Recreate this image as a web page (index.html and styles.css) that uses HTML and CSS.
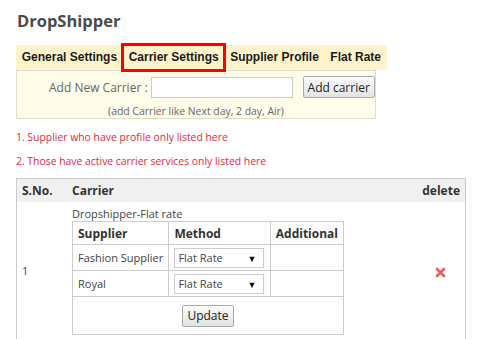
FILE: index.html
```html
<!DOCTYPE html>
<html lang="en">
<head>
    <meta charset="UTF-8">
    <meta name="viewport" content="width=device-width, initial-scale=1.0">
    <title>DropShipper</title>
    <link rel="stylesheet" href="styles.css">
</head>
<body>
    <div class="page">
        <h1 class="page-title">DropShipper</h1>

        <div class="tabs">
            <a class="tab">General Settings</a>
            <a class="tab tab-active">Carrier Settings</a>
            <a class="tab">Supplier Profile</a>
            <a class="tab">Flat Rate</a>
        </div>

        <div class="add-box">
            <div class="add-row">
                <label class="add-label" for="carrierName">Add New Carrier :</label>
                <input type="text" id="carrierName" class="add-input">
                <button class="btn">Add carrier</button>
            </div>
            <div class="add-hint">(add Carrier like Next day, 2 day, Air)</div>
        </div>

        <p class="note">1. Supplier who have profile only listed here</p>
        <p class="note">2. Those have active carrier services only listed here</p>

        <table class="carriers">
            <thead>
                <tr>
                    <th class="col-sno">S.No.</th>
                    <th>Carrier</th>
                    <th class="col-delete">delete</th>
                </tr>
            </thead>
            <tbody>
                <tr>
                    <td class="col-sno">1</td>
                    <td class="carrier-cell">
                        <div class="carrier-name">Dropshipper-Flat rate</div>
                        <table class="methods">
                            <thead>
                                <tr>
                                    <th class="col-supplier">Supplier</th>
                                    <th class="col-method">Method</th>
                                    <th class="col-additional">Additional</th>
                                </tr>
                            </thead>
                            <tbody>
                                <tr>
                                    <td>Fashion Supplier</td>
                                    <td>
                                        <span class="select-wrap">
                                            <select class="select">
                                                <option>Flat Rate</option>
                                            </select>
                                        </span>
                                    </td>
                                    <td></td>
                                </tr>
                                <tr>
                                    <td>Royal</td>
                                    <td>
                                        <span class="select-wrap">
                                            <select class="select">
                                                <option>Flat Rate</option>
                                            </select>
                                        </span>
                                    </td>
                                    <td></td>
                                </tr>
                                <tr>
                                    <td colspan="3" class="update-cell">
                                        <button class="btn">Update</button>
                                    </td>
                                </tr>
                            </tbody>
                        </table>
                    </td>
                    <td class="col-delete delete-cell">
                        <svg class="delete-icon" width="11" height="11" viewBox="0 0 11 11">
                            <path d="M2 2 L9 9 M9 2 L2 9" stroke="#f05a5c" stroke-width="2.6" stroke-linecap="round"/>
                        </svg>
                    </td>
                </tr>
            </tbody>
        </table>
    </div>
</body>
</html>
```

FILE: styles.css
```css
body {
    font-family: 'Open Sans', 'Liberation Sans', Arial, sans-serif;
    margin: 0;
    padding: 0;
    background-color: #fff;
    color: #444;
}

.page {
    padding: 0 16px;
}

.page-title {
    font-size: 16.5px;
    font-weight: bold;
    color: #4a4a4a;
    margin: 0;
    padding: 9px 0 0 1px;
    line-height: 24px;
}

.tabs {
    display: inline-flex;
    margin-top: 12px;
    background-color: #fff3cc;
    height: 25px;
    align-items: center;
}

.tab {
    font-family: 'Liberation Sans', Arial, sans-serif;
    font-size: 12px;
    font-weight: bold;
    color: #1a1a1a;
    padding: 0 5.75px;
    line-height: 25px;
    white-space: nowrap;
    cursor: pointer;
}

.tab-active {
    outline: 3px solid #f00;
    outline-offset: -1px;
}

.add-box {
    width: 358px;
    background-color: #fffde9;
    border: 1px solid #e2ddc4;
}

.add-row {
    display: flex;
    align-items: center;
    padding: 5px 0 0 32px;
    white-space: nowrap;
}

.add-label {
    font-size: 12px;
    color: #666;
    margin-right: 3px;
    flex-shrink: 0;
}

.add-input {
    width: 138px;
    height: 17px;
    border: 1px solid #ccc;
    padding: 1px;
    margin: 0 10px 0 0;
    flex-shrink: 0;
}

.btn {
    font-family: 'Open Sans', sans-serif;
    font-size: 12px;
    color: #222;
    background: linear-gradient(#fbfbfb, #e3e3e3);
    border: 1px solid #aaa;
    border-radius: 2px;
    height: 22px;
    padding: 0 4px;
    white-space: nowrap;
    flex-shrink: 0;
    cursor: pointer;
}

.add-hint {
    font-size: 10.4px;
    color: #666;
    text-align: center;
    margin-top: 6px;
    line-height: 14px;
}

.note {
    font-size: 10.4px;
    color: #e8243f;
    margin: 11px 0 0;
    line-height: 14px;
}

.note + .note {
    margin-top: 10px;
}

.carriers {
    width: 450px;
    margin-top: 10px;
    border: 1px solid #ccc;
    border-collapse: collapse;
    font-size: 11px;
}

.carriers > thead th {
    background-color: #f0f0f0;
    color: #333;
    font-size: 12px;
    font-weight: bold;
    text-align: left;
    height: 23px;
    padding: 0 5px;
}

.carriers > thead th.col-delete {
    text-align: right;
}

.carriers > tbody > tr > td {
    padding: 4px 5px;
    vertical-align: middle;
}

.col-sno {
    width: 40px;
}

.col-delete {
    width: 40px;
}

.carrier-name {
    line-height: 15px;
}

.delete-cell {
    text-align: center;
}

.delete-icon {
    display: inline-block;
    vertical-align: middle;
}

.methods {
    border-collapse: collapse;
    border: 1px solid #ccc;
    width: 272px;
}

.methods th,
.methods td {
    border: 1px solid #ccc;
    padding: 0 5px;
    text-align: left;
    height: 25px;
    white-space: nowrap;
}

.methods th {
    font-size: 12px;
    font-weight: bold;
    color: #333;
    height: 22px;
}

.col-supplier {
    width: 86px;
}

.col-method {
    width: 92px;
}

.select-wrap {
    display: inline-block;
    position: relative;
    vertical-align: middle;
}

.select-wrap::after {
    content: "\25BC";
    position: absolute;
    right: 8px;
    top: 4px;
    font-size: 9px;
    color: #111;
    pointer-events: none;
}

.select {
    appearance: none;
    -webkit-appearance: none;
    font-family: 'Open Sans', sans-serif;
    font-size: 11px;
    color: #444;
    width: 90px;
    height: 20px;
    border: 1px solid #ccc;
    border-radius: 0;
    background-color: #fff;
    padding: 0 3px;
    display: block;
}

.methods td.update-cell {
    text-align: center;
    height: 37px;
}
```
